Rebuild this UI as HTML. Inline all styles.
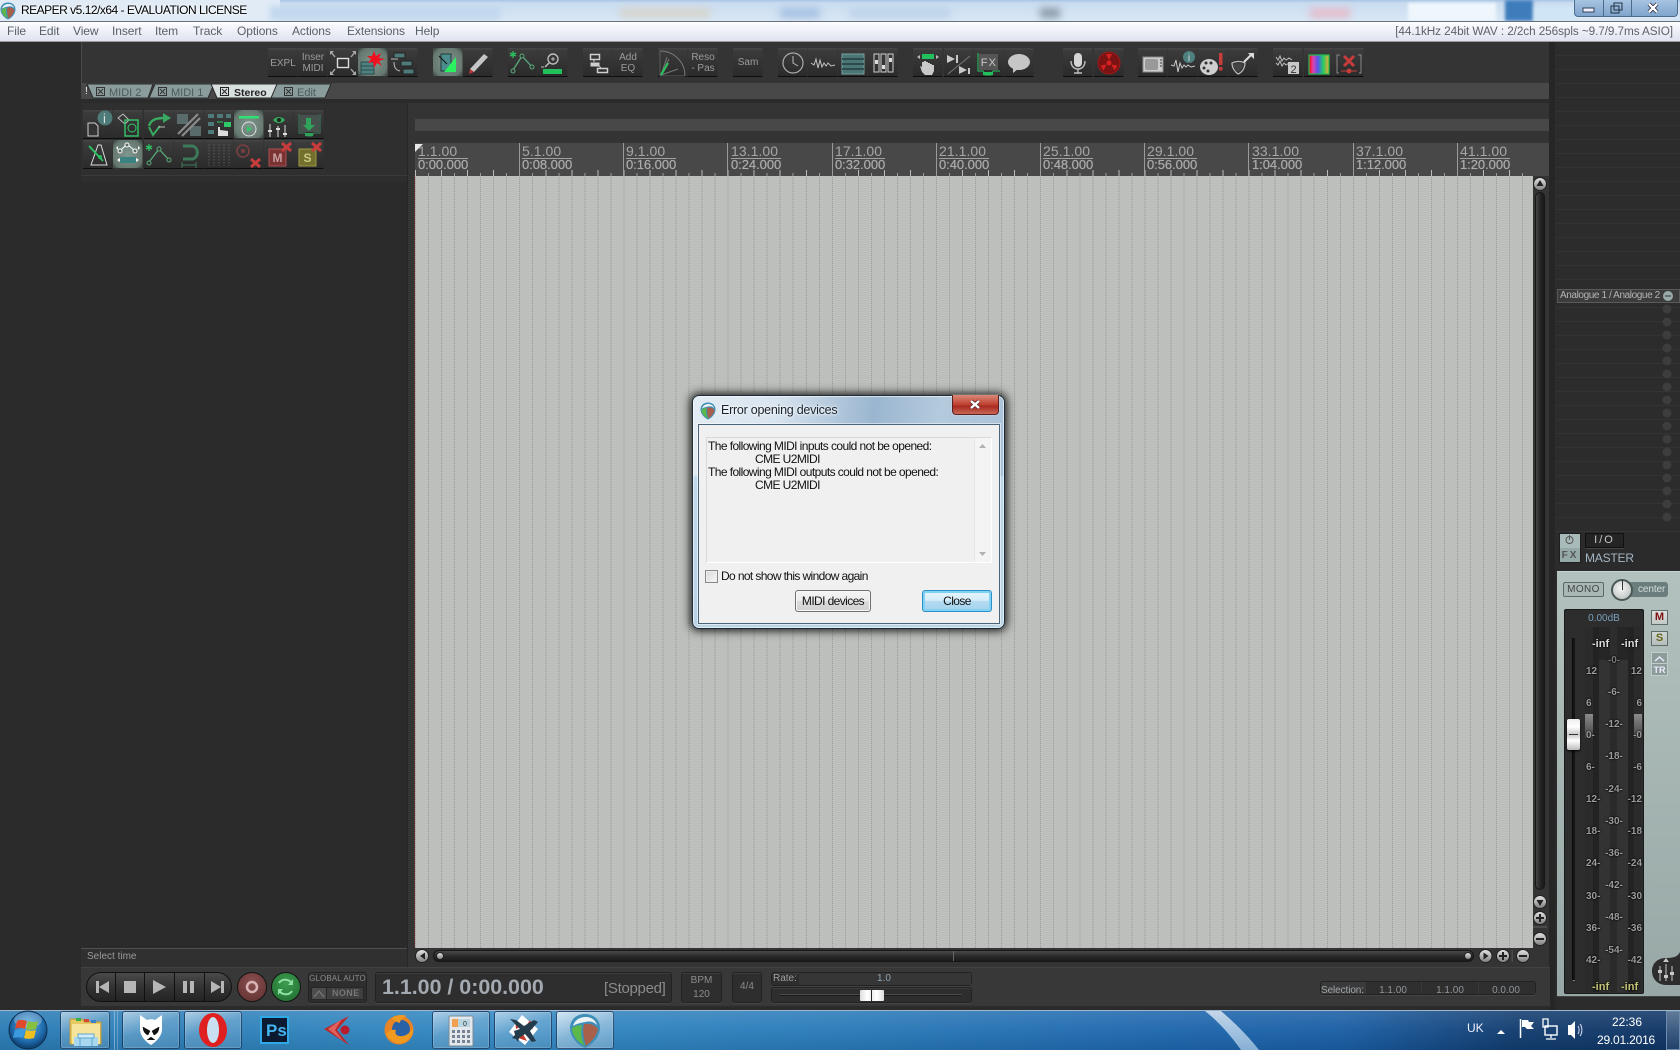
<!DOCTYPE html>
<html><head><meta charset="utf-8"><title>REAPER</title>
<style>
html,body{margin:0;padding:0;width:1680px;height:1050px;overflow:hidden;background:#2b2b2b;font-family:"Liberation Sans",sans-serif}
div,span{position:absolute;box-sizing:border-box;white-space:nowrap}
svg{position:absolute;left:0;top:0}
svg text{font-family:"Liberation Sans",sans-serif}
.m{top:24px;font-size:12px;line-height:15px;color:#5b5f66;letter-spacing:-.08px}
.bar{top:145px;font-size:14px;line-height:12px;color:#a6a6a6;letter-spacing:.05px}
.tim{top:159px;font-size:13px;line-height:11px;color:#ababab;text-shadow:0 0 .6px #aaa;letter-spacing:-.05px}
.ul{top:158px;height:1px;width:50px;background:#a0a0a0}
.tv{top:143px;height:33px;width:1px;background:#9a9a9a}
.lb{font-size:10px;line-height:11px;color:#9c9c9c;font-weight:bold;text-shadow:0 0 2px #000,0 0 1px #000}
.c{transform:translateX(-50%)}
.box{background:#2e2e2e;border:1px solid #222;border-radius:3px;box-shadow:inset 0 1px 0 #3c3c3c,0 1px 0 #444}
.dl{font-size:12px;line-height:13px;color:#111;letter-spacing:-.58px}
.sl{top:985px;font-size:10px;line-height:12px;color:#8d949a}
.tb{top:1011px;height:38px;border:1px solid rgba(10,40,80,.75);border-radius:3px;background:linear-gradient(160deg,rgba(255,255,255,.55),rgba(255,255,255,.2) 45%,rgba(255,255,255,.12));box-shadow:inset 0 0 1px #fff}
</style></head><body>

<!-- title bar -->
<div style="left:0;top:0;width:1680px;height:21px;background:linear-gradient(180deg,#a8c4e4 0,#c9dcf0 3px,#d9e7f5 100%);overflow:hidden">
 <div style="left:0;top:0;width:280px;height:21px;background:#e0ebf6"></div>
 <div style="left:270px;top:6px;width:230px;height:14px;background:#c2d8ee;filter:blur(3px)"></div>
 <div style="left:620px;top:8px;width:90px;height:10px;background:#d6d4cc;filter:blur(4px)"></div>
 <div style="left:780px;top:8px;width:40px;height:10px;background:#a5c0e2;filter:blur(4px)"></div>
 <div style="left:850px;top:8px;width:100px;height:10px;background:#bcd2e8;filter:blur(4px)"></div>
 <div style="left:1040px;top:8px;width:20px;height:10px;background:#8a9aa8;filter:blur(4px)"></div>
 <div style="left:1310px;top:8px;width:40px;height:10px;background:#e4bcca;filter:blur(4px)"></div>
 <div style="left:1408px;top:3px;width:88px;height:18px;background:#eff7fd;filter:blur(1.5px)"></div>
 <div style="left:1505px;top:0;width:28px;height:21px;background:#3f7cbc;filter:blur(1.5px)"></div>
 <div style="left:1535px;top:6px;width:40px;height:15px;background:#cfe6f6;filter:blur(2px)"></div>
 <div style="left:1574px;top:-2px;width:104px;height:19px;border:1px solid #4c6c8c;border-radius:0 0 4px 4px;background:linear-gradient(#a9c6e3,#7fa4cc);box-shadow:0 0 1px #fff"></div>
 <div style="left:1603px;top:0;width:1px;height:16px;background:#4c6c8c"></div>
 <div style="left:1631px;top:0;width:1px;height:16px;background:#4c6c8c"></div>
</div>
<div style="left:21px;top:3px;font-size:12px;line-height:15px;color:#000;text-shadow:0 0 3px #fff,0 0 3px #fff;letter-spacing:-.5px">REAPER v5.12/x64 - EVALUATION LICENSE</div>

<!-- menu -->
<div style="left:0;top:21px;width:1680px;height:21px;background:linear-gradient(180deg,#fff 0,#f4f6fb 25%,#dfe3f1 100%);border-top:1px solid #67717c;border-bottom:1px solid #9a9a9a"></div>
<span class="m" style="left:7px">File</span><span class="m" style="left:39px">Edit</span><span class="m" style="left:73px">View</span><span class="m" style="left:112px">Insert</span><span class="m" style="left:155px">Item</span><span class="m" style="left:193px">Track</span><span class="m" style="left:237px">Options</span><span class="m" style="left:292px">Actions</span><span class="m" style="left:347px">Extensions</span><span class="m" style="left:415px">Help</span>
<span class="m" style="right:7px;font-size:11.75px;color:#5f6368">[44.1kHz 24bit WAV : 2/2ch 256spls ~9.7/9.7ms ASIO]</span>

<!-- main backgrounds -->
<div style="left:0;top:42px;width:81px;height:969px;background:#2b2b2b"></div>
<div style="left:81px;top:42px;width:1468px;height:41px;background:#343434;border-left:1px solid #4a4a4a"></div>
<div style="left:81px;top:83px;width:1468px;height:16px;background:#484848"></div>
<div style="left:81px;top:99px;width:1468px;height:4px;background:#2b2b2b"></div>
<div style="left:81px;top:103px;width:326px;height:72px;background:#2f2f2f"></div>
<div style="left:81px;top:175px;width:326px;height:7px;background:#2e2e2e;border-top:1px solid #3a3a3a"></div>
<div style="left:81px;top:182px;width:326px;height:766px;background:#2b2b2b"></div>
<div style="left:81px;top:948px;width:326px;height:19px;background:#303030;border-top:1px solid #505050"></div>
<span style="left:87px;top:951px;font-size:10px;line-height:12px;color:#9a9a9a">Select time</span>
<div style="left:407px;top:103px;width:1142px;height:864px;background:#343434;border-left:1px solid #262626"></div>
<div style="left:415px;top:119px;width:1134px;height:12px;background:#484848"></div>

<!-- ruler -->
<div style="left:415px;top:143px;width:1134px;height:33px;background:#484848"></div>
<div style="left:415px;top:173px;width:1117px;height:3px;background:repeating-linear-gradient(to right,#9a9a9a 0 1px,transparent 1px 13.025px)"></div>
<div style="left:415px;top:170px;width:1117px;height:6px;background:repeating-linear-gradient(to right,#bdbdbd 0 1px,transparent 1px 26.05px)"></div>
<i class="tv" style="position:absolute;left:519px"></i><i class="tv" style="position:absolute;left:623px"></i><i class="tv" style="position:absolute;left:727px"></i><i class="tv" style="position:absolute;left:832px"></i><i class="tv" style="position:absolute;left:936px"></i><i class="tv" style="position:absolute;left:1040px"></i><i class="tv" style="position:absolute;left:1144px"></i><i class="tv" style="position:absolute;left:1248px"></i><i class="tv" style="position:absolute;left:1353px"></i><i class="tv" style="position:absolute;left:1457px"></i>
<span class="bar" style="left:418px">1.1.00</span><span class="tim" style="left:418px">0:00.000</span><i class="ul" style="position:absolute;left:418px"></i>
<span class="bar" style="left:522px">5.1.00</span><span class="tim" style="left:522px">0:08.000</span><i class="ul" style="position:absolute;left:522px"></i>
<span class="bar" style="left:626px">9.1.00</span><span class="tim" style="left:626px">0:16.000</span><i class="ul" style="position:absolute;left:626px"></i>
<span class="bar" style="left:731px">13.1.00</span><span class="tim" style="left:731px">0:24.000</span><i class="ul" style="position:absolute;left:731px"></i>
<span class="bar" style="left:835px">17.1.00</span><span class="tim" style="left:835px">0:32.000</span><i class="ul" style="position:absolute;left:835px"></i>
<span class="bar" style="left:939px">21.1.00</span><span class="tim" style="left:939px">0:40.000</span><i class="ul" style="position:absolute;left:939px"></i>
<span class="bar" style="left:1043px">25.1.00</span><span class="tim" style="left:1043px">0:48.000</span><i class="ul" style="position:absolute;left:1043px"></i>
<span class="bar" style="left:1147px">29.1.00</span><span class="tim" style="left:1147px">0:56.000</span><i class="ul" style="position:absolute;left:1147px"></i>
<span class="bar" style="left:1252px">33.1.00</span><span class="tim" style="left:1252px">1:04.000</span><i class="ul" style="position:absolute;left:1252px"></i>
<span class="bar" style="left:1356px">37.1.00</span><span class="tim" style="left:1356px">1:12.000</span><i class="ul" style="position:absolute;left:1356px"></i>
<span class="bar" style="left:1460px">41.1.00</span><span class="tim" style="left:1460px">1:20.000</span><i class="ul" style="position:absolute;left:1460px"></i>

<!-- arrange -->
<div style="left:415px;top:176px;width:1118px;height:772px;background-color:#bcbfbc;background-image:repeating-linear-gradient(to bottom,#bcbfbc 0 1px,transparent 1px 2px),repeating-linear-gradient(to right,#969a96 0 1px,transparent 1px 13.025px)"></div>
<div style="left:414px;top:176px;width:1px;height:772px;background:#5a2e2e"></div>

<!-- right column -->
<div style="left:1549px;top:42px;width:6px;height:969px;background:#262626"></div>
<div style="left:1555px;top:42px;width:125px;height:530px;background-color:#2c2c2c;background-image:repeating-linear-gradient(to bottom,transparent 0 13px,#333 13px 14px)"></div>
<div style="left:1557px;top:289px;width:123px;height:14px;background:#3c3c3c;border:1px solid #5a5a5a;font-size:10px;line-height:12px;color:#b4b4b4;padding-left:2px;letter-spacing:-.4px">Analogue 1 / Analogue 2</div>
<div style="left:1557px;top:533px;width:123px;height:39px;background:#2b2b2b"></div>

<!-- master panel -->
<div style="left:1557px;top:571px;width:123px;height:425px;background:linear-gradient(180deg,#b3c1be 0,#a8b7b4 40%,#97a8a6 100%);border-top:1px solid #c8d2d0"></div>
<div style="left:1564px;top:609px;width:80px;height:385px;background:#2d2d2d;border:1px solid #1a1a1a;border-radius:2px"></div>
<div style="left:1585px;top:627px;width:25px;height:365px;background:linear-gradient(to right,#2b2b2b 0 8px,#232323 8px 14px,#262626 14px)"></div>
<div style="left:1617px;top:627px;width:25px;height:365px;background:linear-gradient(to right,#262626 0 11px,#232323 11px 17px,#2b2b2b 17px)"></div>
<div style="left:1599px;top:660px;width:29px;height:332px;background:#333"></div>
<div style="left:1610px;top:660px;width:7px;height:332px;background:#2a2a2a"></div>
<div style="left:1585px;top:714px;width:8px;height:24px;background:linear-gradient(#8a8a8a,#444)"></div>
<div style="left:1634px;top:714px;width:8px;height:24px;background:linear-gradient(#8a8a8a,#444)"></div>
<div style="left:1572px;top:638px;width:3px;height:343px;background:#141414;border-left:1px solid #0c0c0c;border-bottom:1px solid #777"></div>
<div style="left:1567px;top:719px;width:13px;height:31px;background:linear-gradient(#eee 0,#fff 25%,#c9c9c9 50%,#fff 70%,#bbb 100%);border-radius:2px;box-shadow:0 1px 2px #000"></div>
<div style="left:1569px;top:734px;width:9px;height:1px;background:#333"></div>

<div style="left:1563px;top:582px;width:41px;height:15px;background:#a9b8b5;border:1px solid #5b6a68;border-radius:2px;font-size:10px;line-height:13px;color:#444;text-align:center;letter-spacing:.4px">MONO</div>
<div style="left:1622px;top:582px;width:46px;height:15px;background:#6c7d7d;border-radius:0 3px 3px 0;font-size:10px;line-height:15px;color:#d4dcdc;padding-left:16px;letter-spacing:-.1px">center</div>
<div style="left:1611px;top:579px;width:22px;height:22px;border-radius:50%;background:radial-gradient(circle at 45% 40%,#f6f6f6,#c2c8c6 75%);border:2px solid #4b5858"></div>
<div style="left:1621.5px;top:580px;width:1px;height:10px;background:#333"></div>
<div style="left:1651px;top:610px;width:17px;height:15px;background:linear-gradient(#dde2e0,#c2cac7);border:1px solid #5e6b69;font-size:11px;line-height:13px;font-weight:bold;color:#7e1010;text-align:center">M</div>
<div style="left:1651px;top:631px;width:17px;height:15px;background:linear-gradient(#cfd6d3,#b4bdba);border:1px solid #5e6b69;font-size:11px;line-height:13px;font-weight:bold;color:#66661a;text-align:center">S</div>
<div style="left:1651px;top:652px;width:17px;height:24px;background:#8d9c9b;border:1px solid #c3cccb;font-size:9px;line-height:9px;font-weight:bold;color:#eef;text-align:center;padding-top:13px">TR</div>
<div style="left:1652px;top:663px;width:15px;height:1px;background:#c3cccb"></div>

<span style="left:1604px;top:613px;font-size:10px;line-height:12px;color:#7a9fb8;transform:translateX(-50%)">0.00dB</span>
<span class="lb" style="left:1592px;top:639px;color:#ddd;font-size:11px">-inf</span><span class="lb" style="left:1621px;top:639px;color:#ddd;font-size:11px">-inf</span>
<span class="lb" style="left:1592px;top:982px;color:#c6c679;font-size:11px">-inf</span><span class="lb" style="left:1621px;top:982px;color:#c6c679;font-size:11px">-inf</span>
<span class="lb" style="left:1586px;top:666px">12</span><span class="lb" style="left:1586px;top:698px">6</span><span class="lb" style="left:1586px;top:730px">0-</span><span class="lb" style="left:1586px;top:762px">6-</span><span class="lb" style="left:1586px;top:794px">12-</span><span class="lb" style="left:1586px;top:826px">18-</span><span class="lb" style="left:1586px;top:858px">24-</span><span class="lb" style="left:1586px;top:891px">30-</span><span class="lb" style="left:1586px;top:923px">36-</span><span class="lb" style="left:1586px;top:955px">42-</span>
<span class="lb" style="right:38px;top:666px">12</span><span class="lb" style="right:38px;top:698px">6</span><span class="lb" style="right:38px;top:730px">-0</span><span class="lb" style="right:38px;top:762px">-6</span><span class="lb" style="right:38px;top:794px">-12</span><span class="lb" style="right:38px;top:826px">-18</span><span class="lb" style="right:38px;top:858px">-24</span><span class="lb" style="right:38px;top:891px">-30</span><span class="lb" style="right:38px;top:923px">-36</span><span class="lb" style="right:38px;top:955px">-42</span>
<span class="lb c" style="left:1614px;top:655px;color:#777">-0-</span><span class="lb c" style="left:1614px;top:687px">-6-</span><span class="lb c" style="left:1614px;top:719px">-12-</span><span class="lb c" style="left:1614px;top:751px">-18-</span><span class="lb c" style="left:1614px;top:784px">-24-</span><span class="lb c" style="left:1614px;top:816px">-30-</span><span class="lb c" style="left:1614px;top:848px">-36-</span><span class="lb c" style="left:1614px;top:880px">-42-</span><span class="lb c" style="left:1614px;top:912px">-48-</span><span class="lb c" style="left:1614px;top:945px">-54-</span>
<div style="left:1585px;top:533px;width:39px;height:15px;background:#242424;border:1px solid #111;box-shadow:0 1px 0 #444;font-size:11px;line-height:13px;color:#c8c8c8;text-align:center;letter-spacing:2px">I/O</div>
<span style="left:1585px;top:551px;font-size:12px;line-height:15px;color:#a4b6c4;letter-spacing:-.2px">MASTER</span>
<div style="left:1559px;top:533px;width:22px;height:30px;background:linear-gradient(#a8bab9 0 50%,#95a9a8 50%);border:1px solid #1e1e1e;font-size:10px;line-height:10px;color:#555;text-align:center;padding-top:17px;letter-spacing:2px;font-weight:bold">FX</div>
<div style="left:1557px;top:996px;width:123px;height:15px;background:#2c2c2c;border-top:1px solid #444"></div>

<!-- transport -->
<div style="left:81px;top:967px;width:1469px;height:44px;background:#383838;border-top:1px solid #424242"></div>
<div style="left:81px;top:1006px;width:1469px;height:5px;background:#2b2b2b"></div>
<div style="left:86px;top:972px;width:146px;height:30px;border:1px solid #111;border-radius:15px;background:linear-gradient(#4a4a4a,#333 50%,#242424)"></div>
<div style="left:115px;top:973px;width:1px;height:28px;background:#111"></div><div style="left:144px;top:973px;width:1px;height:28px;background:#111"></div><div style="left:174px;top:973px;width:1px;height:28px;background:#111"></div><div style="left:204px;top:973px;width:1px;height:28px;background:#111"></div>
<div style="left:237px;top:972px;width:30px;height:30px;border-radius:50%;background:radial-gradient(circle at 50% 35%,#8a5050,#5e2e2e);border:1px solid #141414"></div>
<div style="left:271px;top:972px;width:30px;height:30px;border-radius:50%;background:radial-gradient(circle at 50% 35%,#3d9c4f,#1f6a30);border:1px solid #141414"></div>
<div class="box" style="left:308px;top:972px;width:59px;height:31px"></div>
<span style="left:337.5px;top:974px;font-size:8px;line-height:10px;color:#8d8d8d;letter-spacing:.1px;transform:translateX(-50%)">GLOBAL AUTO</span>
<div style="left:311px;top:987px;width:53px;height:13px;background:#3f3f3f;border:1px solid #262626"></div>
<div style="left:311px;top:987px;width:16px;height:13px;background:#4d4d4d;border:1px solid #262626"></div>
<span style="left:332px;top:988px;font-size:9px;line-height:11px;color:#777;font-weight:bold;letter-spacing:.4px">NONE</span>
<div class="box" style="left:375px;top:972px;width:297px;height:31px"></div>
<span style="left:382px;top:975px;font-size:21.400px;line-height:25px;font-weight:bold;color:#a3a9b0">1.1.00 / 0:00.000</span>
<span style="left:604px;top:980px;font-size:15px;line-height:17px;color:#8b8b8b;letter-spacing:-.3px">[Stopped]</span>
<div class="box" style="left:681px;top:972px;width:41px;height:31px;font-size:10px;line-height:14px;color:#8c8c8c;text-align:center;padding-top:1px;white-space:normal">BPM<br>120</div>
<div class="box" style="left:732px;top:972px;width:30px;height:31px;font-size:10px;line-height:28px;color:#8c8c8c;text-align:center">4/4</div>
<div class="box" style="left:771px;top:972px;width:201px;height:14px"></div>
<div style="left:799px;top:973px;width:172px;height:12px;background:#363636"></div>
<span style="left:773px;top:973px;font-size:10px;line-height:12px;color:#a0a0a0">Rate:</span>
<span style="left:884px;top:973px;font-size:10px;line-height:12px;color:#8fa3b3;transform:translateX(-50%)">1.0</span>
<div class="box" style="left:771px;top:987px;width:201px;height:16px"></div>
<div style="left:780px;top:994px;width:182px;height:2px;background:#4b4b4b;border-bottom:1px solid #1b1b1b"></div>
<div style="left:860px;top:990px;width:24px;height:11px;background:linear-gradient(to right,#ddd,#fff 30%,#eee 50%,#fff 70%,#ddd);border-radius:1px"></div>
<div style="left:871px;top:990px;width:1px;height:11px;background:#222"></div>
<div class="box" style="left:1320px;top:981px;width:216px;height:14px;background:#3a3a3a"></div>
<div style="left:1366px;top:982px;width:55px;height:12px;background:#2f2f2f"></div><div style="left:1422px;top:982px;width:56px;height:12px;background:#2f2f2f"></div><div style="left:1479px;top:982px;width:56px;height:12px;background:#2f2f2f"></div>
<span class="sl" style="left:1321px;color:#a0a6aa;letter-spacing:-.1px">Selection:</span><span class="sl c" style="left:1393px">1.1.00</span><span class="sl c" style="left:1450px">1.1.00</span><span class="sl c" style="left:1506px">0.0.00</span>

<!-- scrollbars -->
<div style="left:433px;top:950px;width:1041px;height:12px;border-radius:6px;background:linear-gradient(#4a4a4a,#262626 60%,#1a1a1a);border:1px solid #161616"></div>
<div style="left:953px;top:951px;width:1px;height:10px;background:#666"></div>
<div style="left:1535px;top:192px;width:10px;height:698px;border-radius:5px;background:linear-gradient(to right,#454545,#232323 60%,#1a1a1a);border:1px solid #161616"></div>

<!-- SVG icon layer -->
<svg width="1680" height="1050" viewBox="0 0 1680 1050" xmlns="http://www.w3.org/2000/svg">
<defs>
<linearGradient id="bg" x1="0" y1="0" x2="0" y2="1"><stop offset="0" stop-color="#454545"/><stop offset=".1" stop-color="#3b3b3b"/><stop offset="1" stop-color="#2a2a2a"/></linearGradient>
<radialGradient id="ag" cx=".5" cy=".5" r=".65"><stop offset="0" stop-color="#7f978f"/><stop offset=".8" stop-color="#66786f"/><stop offset="1" stop-color="#3f4a46"/></radialGradient>
<linearGradient id="rn" x1="0" y1="0" x2="0" y2="1"><stop offset="0" stop-color="#e6e6e6"/><stop offset="1" stop-color="#7d7d7d"/></linearGradient>
<radialGradient id="orb" cx=".5" cy=".4" r=".6"><stop offset="0" stop-color="#5cb4e8"/><stop offset=".7" stop-color="#1e68a8"/><stop offset="1" stop-color="#0c3a66"/></radialGradient>
<linearGradient id="rb" x1="0" y1="0" x2="1" y2="0"><stop offset="0" stop-color="#f00"/><stop offset=".2" stop-color="#d4a"/><stop offset=".45" stop-color="#55e"/><stop offset=".7" stop-color="#2c6"/><stop offset="1" stop-color="#ea3"/></linearGradient>
<g id="b"><rect width="29.5" height="29" fill="url(#bg)"/><rect y="28" width="29.5" height="1" fill="#0d0d0d"/></g>
<g id="a"><rect width="29.5" height="29" fill="url(#ag)"/><rect y="28" width="29.5" height="1" fill="#333"/></g>
<g id="rp">
<path d="M16 1C7 1 1 7 1 15c0 9 8 17 15 20 7-3 15-11 15-20C31 7 25 1 16 1z" fill="#3f8fb8"/>
<path d="M4 13c2-7 8-9 13-9 6 0 10 4 11 8-4-4-8-4-12-3-5 1-9 2-12 4z" fill="#eef4f6"/>
<path d="M3 15c3-2 7-3 10-3-2 8 0 16 3 21C9 29 3 23 3 15z" fill="#5cb848"/>
<path d="M15 11c6-1 11 1 14 5-1 7-7 13-12 17-2-7-4-15-2-22z" fill="#a8604a"/>
</g>
</defs>

<!-- tiny logo title -->
<use href="#rp" transform="translate(0,2) scale(.5)"/>

<!-- window buttons -->
<g fill="none" stroke="#fff">
<rect x="1583" y="8" width="11" height="4" fill="#eef" stroke="#345"/>
<rect x="1611" y="6" width="8" height="7" stroke="#234" fill="none"/><rect x="1614" y="3" width="8" height="7" stroke="#234" fill="none"/>
<path d="M1649 4l8 8M1657 4l-8 8" stroke="#223" stroke-width="4"/><path d="M1649 4l8 8M1657 4l-8 8" stroke="#fff" stroke-width="2.4"/>
</g>

<!-- toolbar row -->
<g font-size="10" fill="#9c9c9c" text-anchor="middle">
<g transform="translate(268,48)"><use href="#b"/><text x="15" y="18" font-size="10">EXPL</text></g>
<g transform="translate(298,48)"><use href="#b"/><text x="15" y="12">Inser</text><text x="15" y="23">MIDI</text></g>
<g transform="translate(328,48)"><use href="#b"/><rect x="9.5" y="10.5" width="11" height="9" fill="none" stroke="#ddd" stroke-width="1.4"/><path d="M7 9L3 4M23 9l4-5M7 21l-4 5M23 21l4 5" stroke="#aaa" stroke-width="1.4"/><path d="M2 3l4 0-4 4zM28 3l-4 0 4 4zM2 27l4 0-4-4zM28 27l-4 0 4-4z" fill="#aaa"/></g>
<g transform="translate(358,48)"><use href="#a"/><rect x="3" y="14" width="13" height="12" fill="#4e8282" stroke="#2c4c4c"/><path d="M3 18h13M3 22h13" stroke="#2c4c4c"/><path d="M16 3l2 5 5-3-2 5 6 1-6 2 3 5-5-3-3 5-1-6-5 1 3-4-4-3 5 0z" fill="#f01020"/></g>
<g transform="translate(388,48)"><use href="#b"/><rect x="6" y="5" width="11" height="5" fill="#4e7a7a" stroke="#222"/><rect x="13" y="13" width="11" height="5" fill="#4e7a7a" stroke="#222"/><rect x="15" y="21" width="11" height="5" fill="#4e7a7a" stroke="#222"/><path d="M6 14c0 6 2 8 6 9M3 11h7" stroke="#bbb" fill="none"/></g>

<g transform="translate(433,48)"><use href="#a"/><path d="M8 6h10v17H8z" fill="#4b8c8c" stroke="#1e3a3a"/><path d="M11 24l12-15v15z" fill="#2bf060"/><path d="M6 8l8 8" stroke="#111" stroke-width="1"/></g>
<g transform="translate(463,48)"><use href="#b"/><path d="M7 21L21 6l4 3L11 24z" fill="#c6c6c6"/><path d="M7 21l4 3-5 2z" fill="#c0363a"/></g>

<g transform="translate(508,48)"><use href="#b"/><path d="M5 22l9-14 10 11" fill="none" stroke="#5aa97a" stroke-width="1.3"/><circle cx="5" cy="23" r="2" fill="#333" stroke="#5aa97a"/><circle cx="14" cy="8" r="2" fill="#333" stroke="#5aa97a"/><circle cx="24" cy="19" r="2" fill="#333" stroke="#5aa97a"/><path d="M5 3v7M2 5l6 3M8 5L2 8" stroke="#2ec060" stroke-width="1.3"/></g>
<g transform="translate(538,48)"><use href="#b"/><circle cx="15" cy="11" r="5" fill="none" stroke="#bbb" stroke-width="1.4"/><path d="M11 15l-4 4" stroke="#bbb" stroke-width="1.5"/><path d="M13 11h4M15 9v4" stroke="#bbb"/><rect x="5" y="21" width="19" height="5" fill="#22c05c"/><path d="M3 19h3" stroke="#bbb"/></g>

<g transform="translate(583,48)"><use href="#b"/><rect x="7.500" y="6.500" width="9" height="5" fill="none" stroke="#cfcfcf" stroke-width="1.500"/><rect x="7.500" y="14.500" width="9" height="4" fill="#cfcfcf"/><rect x="14.500" y="20.500" width="10" height="4" fill="none" stroke="#cfcfcf" stroke-width="1.500"/><path d="M11 12v2M16 18l2 2" stroke="#ccc"/></g>
<g transform="translate(613,48)"><use href="#b"/><text x="15" y="12">Add</text><text x="15" y="23">EQ</text></g>

<g transform="translate(658,48)"><use href="#b"/><path d="M2 3c14 0 25 11 25 25" fill="none" stroke="#7a7a7a"/><path d="M2 3v25h25" fill="none" stroke="#5a5a5a"/><path d="M3 27l17-6M3 27l8-16M3 27L9 9" stroke="#777"/><path d="M3 27l7-12" stroke="#2bc060" stroke-width="2.2"/></g>
<g transform="translate(688,48)"><use href="#b"/><text x="15" y="12">Reso</text><text x="15" y="23">- Pas</text></g>

<g transform="translate(733,48)"><use href="#b"/><text x="15" y="17">Sam</text></g>

<g transform="translate(778,48)"><use href="#b"/><circle cx="15" cy="15" r="10" fill="none" stroke="#aaa" stroke-width="1.2"/><path d="M15 8v7l5 3" stroke="#bbb" fill="none"/></g>
<g transform="translate(808,48)"><use href="#b"/><path d="M3 15l3 2 2-6 2 9 2-8 2 7 2-4 2 3 2-3 3 3 4-1" fill="none" stroke="#c0c0c0" stroke-width="1"/></g>
<g transform="translate(838,48)"><use href="#b"/><rect x="4" y="6" width="22" height="20" fill="#4a7776" stroke="#7aa0a0"/><path d="M4 11h22M4 16h22M4 21h22" stroke="#233c3c" stroke-width="1.4"/></g>
<g transform="translate(868,48)"><use href="#b"/><g fill="none" stroke="#cfcfcf"><rect x="6" y="6" width="5" height="18"/><rect x="13" y="6" width="5" height="18"/><rect x="20" y="6" width="5" height="18"/></g><rect x="7" y="12" width="3" height="4" fill="#ddd"/><rect x="14" y="17" width="3" height="4" fill="#ddd"/><rect x="21" y="10" width="3" height="4" fill="#ddd"/></g>

<g transform="translate(913,48)"><use href="#b"/><rect x="9" y="6" width="12" height="5" fill="#22c05c"/><path d="M7 7l-3 2 3 2zM23 7l3 2-3 2z" fill="#bbb"/><path d="M9 24l-2-6 2 1 0-5 2 0 0-1 2 0 0 1 2 0 0 1 2 0 0 1 2 0 0 1 2 0v6l-2 4H12z" fill="#c9c9c9"/></g>
<g transform="translate(944,48)"><use href="#b"/><path d="M3 7l8 4-8 4zM12 7h2v8h-2z" fill="#c8c8c8"/><path d="M4 26L26 8" stroke="#777"/><path d="M15 18l8 4-8 4zM24 20h2v6h-2z" fill="#c8c8c8"/></g>
<g transform="translate(974,48)"><use href="#b"/><rect x="5" y="6" width="19" height="16" fill="#555"/><path d="M4 5v18h5l2 4h6l2-4h7" fill="none" stroke="#22c05c"/><path d="M9 24h10v3H9z" fill="#22c05c"/><text x="15" y="18" font-size="11" letter-spacing="1.2" fill="#c8c8c8">FX</text></g>
<g transform="translate(1004,48)"><use href="#b"/><ellipse cx="15" cy="14" rx="11" ry="8" fill="#c6c6c6"/><path d="M9 20l0 5 5-4z" fill="#c6c6c6"/></g>

<g transform="translate(1063,48)"><use href="#b"/><rect x="11" y="5" width="8" height="14" rx="4" fill="#d5d5d5"/><path d="M8 13c0 5 3 8 7 8s7-3 7-8M15 21v4M11 25h8" fill="none" stroke="#c0c0c0" stroke-width="1.4"/></g>
<g transform="translate(1094,48)"><use href="#b"/><circle cx="15" cy="15" r="11" fill="#7a1414" stroke="#a01818"/><circle cx="15" cy="15" r="2.5" fill="#d52020"/><path d="M15 12l-3-6h6zM12.5 16.5l-6 1 3 5zM17.5 16.5l6 1-3 5z" fill="#d52020"/></g>

<g transform="translate(1138,48)"><use href="#b"/><rect x="5" y="9" width="20" height="15" fill="#ccc" stroke="#888"/><rect x="7" y="11" width="13" height="11" rx="2" fill="#999"/><path d="M22 12h2M22 15h2M22 18h2" stroke="#333"/></g>
<g transform="translate(1168,48)"><use href="#b"/><path d="M3 17l3 1 2-6 2 12 2-9 2 5 2-3 2 2 2-2 3 2 4-1" fill="none" stroke="#c8c8c8"/><circle cx="21" cy="9" r="6" fill="#4f8080"/><text x="21" y="13" font-size="10" fill="#ddd">i</text></g>
<g transform="translate(1198,48)"><use href="#b"/><ellipse cx="11" cy="19" rx="9" ry="8" fill="#cfcfcf"/><circle cx="8" cy="15" r="1.5" fill="#333"/><circle cx="13" cy="15" r="1.5" fill="#333"/><circle cx="6" cy="20" r="1.5" fill="#333"/><circle cx="10" cy="23" r="1.5" fill="#333"/><rect x="21" y="5" width="3.5" height="12" fill="#c83c3c"/><rect x="21" y="19" width="3.5" height="3.5" fill="#c83c3c"/></g>
<g transform="translate(1228,48)"><use href="#b"/><path d="M4 15c4-2 9-2 13 0 0 6-4 10-7 11-3-2-6-6-6-11z" fill="none" stroke="#c0c0c0" stroke-width="1.2"/><path d="M5 16c3-1 7-1 10 0 0 4-3 7-5 8-2-1-5-4-5-8z" fill="#444"/><path d="M16 14l7-7" stroke="#ddd" stroke-width="2"/><path d="M20 5h6v6z" fill="#ddd"/></g>

<g transform="translate(1273,48)"><use href="#b"/><path d="M3 9l2 3 2-4 2 5 2-3 2 2 3-2 3 2M3 15l2 2 2-4 2 5 2-3 2 2 3-2" fill="none" stroke="#bbb"/><rect x="15" y="14" width="11" height="12" fill="#c8c8c8"/><text x="20.5" y="25" font-size="11" fill="#333">2</text></g>
<g transform="translate(1304,48)"><use href="#b"/><rect x="5" y="7" width="20" height="19" fill="url(#rb)" stroke="#20c050" stroke-width="1.2"/></g>
<g transform="translate(1334,48)"><use href="#b"/><path d="M6 7H3v18h2M24 7h3v18h-2" stroke="#888" fill="none"/><path d="M10 8l10 10M20 8L10 18" stroke="#c83c3c" stroke-width="3"/><path d="M7 23h16" stroke="#c83c3c"/><circle cx="15" cy="23" r="2.4" fill="#c83c3c"/></g>
</g>

<!-- tabs -->
<g font-size="11" fill="#4d5c5c">
<path d="M87 84H153l-5 14H93z" fill="#8b9c9c" stroke="#2a2a2a"/>
<path d="M154 84H213l-6 14H148z" fill="#8b9c9c" stroke="#2a2a2a" transform="translate(1,0)"/>
<path d="M211 84H279l-7 14H217z" fill="#d8dfdf" stroke="#2a2a2a"/>
<path d="M277 84H331l-6 14H271z" fill="#8b9c9c" stroke="#2a2a2a"/>
<text x="85" y="94" fill="#eee" font-size="10">!</text>
<rect x="96.5" y="87.5" width="8" height="8" fill="none" stroke="#333"/><path d="M98 89l5 5M103 89l-5 5" stroke="#333"/>
<rect x="158.5" y="87.5" width="8" height="8" fill="none" stroke="#333"/><path d="M160 89l5 5M165 89l-5 5" stroke="#333"/>
<rect x="220.5" y="87.5" width="8" height="8" fill="none" stroke="#222"/><path d="M222 89l5 5M227 89l-5 5" stroke="#222"/>
<rect x="284.5" y="87.5" width="8" height="8" fill="none" stroke="#333"/><path d="M286 89l5 5M291 89l-5 5" stroke="#333"/>
<text x="109" y="96">MIDI 2</text><text x="171" y="96">MIDI 1</text><text x="234" y="96" fill="#222" font-weight="bold" font-size="10.5">Stereo</text><text x="297" y="96">Edit</text>
</g>

<!-- TCP buttons row 1 -->
<g>
<g transform="translate(83,110)"><use href="#b"/><circle cx="22" cy="8" r="7.5" fill="#4e7a7a"/><text x="20" y="13" font-size="13" fill="#ddd">i</text><path d="M5 13h7l3 3v10H5z" fill="#333" stroke="#ccc"/></g>
<g transform="translate(113,110)"><use href="#b"/><path d="M5 8l5-4 6 6-4 4z" fill="none" stroke="#bbb"/><rect x="12" y="10" width="13" height="16" fill="none" stroke="#32c76a" stroke-width="1.4"/><circle cx="19" cy="18" r="4" fill="none" stroke="#32c76a"/></g>
<g transform="translate(144,110)"><use href="#b"/><path d="M5 16c2-7 8-8 16-8" fill="none" stroke="#39a860" stroke-width="2.4"/><path d="M19 3l8 5-8 5z" fill="#39a860"/><path d="M5 17l4 8 7-9" fill="none" stroke="#39a860" stroke-width="2"/><path d="M14 17h7" stroke="#bbb"/></g>
<g transform="translate(174,110)"><use href="#b"/><rect x="3" y="4" width="11" height="10" fill="#596b6b"/><rect x="16" y="16" width="11" height="10" fill="#596b6b"/><path d="M4 24L24 4M8 26L26 8" stroke="#8a8a8a" stroke-width="2.2"/></g>
<g transform="translate(204,110)"><use href="#b"/><g fill="#4e7a7a"><rect x="4" y="4" width="6" height="4"/><rect x="13" y="4" width="6" height="4"/><rect x="22" y="4" width="5" height="4"/><rect x="4" y="12" width="6" height="4"/><rect x="4" y="20" width="6" height="4"/></g><rect x="20" y="12" width="7" height="5" fill="#30c868"/><path d="M13 12h6" stroke="#30c868"/><path d="M14 26v-9l2 0 0 3 8 1v5z" fill="#ddd"/></g>
<g transform="translate(234,110)"><use href="#a"/><rect x="5" y="6" width="20" height="2.5" fill="#30e070"/><circle cx="15" cy="19" r="7" fill="none" stroke="#ddd"/><path d="M13 16l5 3-5 3z" fill="#30c868"/></g>
<g transform="translate(264,110)"><use href="#b"/><path d="M9 10c3-4 9-4 12 0-3 4-9 4-12 0z" fill="#35a85c"/><circle cx="15" cy="10" r="2" fill="#222"/><path d="M6 14v13M14 16v11M21 15v12" stroke="#ddd"/><rect x="4" y="20" width="4" height="2" fill="#ddd"/><rect x="12" y="18" width="4" height="2" fill="#ddd"/><rect x="19" y="23" width="4" height="2" fill="#ddd"/></g>
<g transform="translate(294,110)"><use href="#b"/><path d="M5 4v19h6l2 3h5l2-3h6V4" fill="none" stroke="#3d7a5a"/><rect x="6" y="5" width="19" height="17" fill="#46514d"/><path d="M12 8h5v7h4l-6 6-6-6h3z" fill="#2fa35a"/><rect x="11" y="23" width="8" height="3" fill="#2fa35a"/></g>
</g>
<!-- TCP buttons row 2 -->
<g>
<g transform="translate(83,140)"><use href="#b"/><path d="M8 25L15 5h3l6 20z" fill="none" stroke="#ddd"/><path d="M6 6l14 15" stroke="#2ac060" stroke-width="2"/><circle cx="17" cy="17" r="2" fill="#2ac060"/></g>
<g transform="translate(113,140)"><use href="#a"/><path d="M7 11l7-7 8 7" fill="none" stroke="#fff"/><circle cx="7" cy="11" r="2" fill="#5a6b66" stroke="#fff"/><circle cx="14" cy="5" r="2" fill="#5a6b66" stroke="#fff"/><circle cx="22" cy="11" r="2" fill="#5a6b66" stroke="#fff"/><rect x="7" y="17" width="16" height="6" fill="#3d8282"/><path d="M4 20l3-2v4zM26 20l-3-2v4zM3 8l2-2v4zM27 8l-2-2v4z" fill="#fff"/></g>
<g transform="translate(144,140)"><use href="#b"/><path d="M5 22l10-13 10 11" fill="none" stroke="#5aa97a" stroke-width="1.3"/><circle cx="5" cy="23" r="2" fill="#333" stroke="#5aa97a"/><circle cx="15" cy="9" r="2" fill="#333" stroke="#5aa97a"/><circle cx="25" cy="20" r="2" fill="#333" stroke="#5aa97a"/><path d="M5 4v7M2 6l6 3M8 6L2 9" stroke="#2ec060" stroke-width="1.3"/></g>
<g transform="translate(174,140)"><use href="#b"/><path d="M9 6h10a7 7 0 0 1 0 13H9" fill="none" stroke="#3d7a5a" stroke-width="3"/><path d="M8 25h14M8 22v6M22 22v6M12 25h6" stroke="#3d7a5a"/></g>
<g transform="translate(204,140)"><use href="#b"/><path d="M5 4v22M10 4v22M15 4v22M20 4v22M25 4v22" stroke="#5a5a5a" stroke-dasharray="1.5 1.5"/></g>
<g transform="translate(234,140)"><use href="#b"/><circle cx="9" cy="11" r="6" fill="none" stroke="#7a4040" stroke-width="1.6"/><circle cx="9" cy="11" r="2" fill="#7a4040"/><path d="M17 19l9 8M26 19l-9 8" stroke="#c83c3c" stroke-width="3"/></g>
<g transform="translate(264,140)"><use href="#b"/><rect x="5" y="9" width="17" height="17" fill="#7a3232" stroke="#a85050"/><text x="13.5" y="22" font-size="12" font-weight="bold" fill="#c8a0a0" text-anchor="middle">M</text><path d="M18 3l9 8M27 3l-9 8" stroke="#c83c3c" stroke-width="3"/></g>
<g transform="translate(294,140)"><use href="#b"/><rect x="5" y="9" width="17" height="17" fill="#73702e" stroke="#9c9844"/><text x="13.5" y="22" font-size="12" font-weight="bold" fill="#cbc884" text-anchor="middle">S</text><path d="M18 3l9 8M27 3l-9 8" stroke="#c83c3c" stroke-width="3"/></g>
</g>

<!-- edit cursor flag -->
<path d="M415 144h8l-8 8z" fill="#e8e8e8"/>

<!-- scroll buttons -->
<g fill="url(#rn)" stroke="#222">
<circle cx="1540" cy="184" r="6.5"/><circle cx="1540" cy="902" r="6.5"/><circle cx="1540" cy="918" r="6.5"/><circle cx="1540" cy="939" r="6.5"/>
<circle cx="422" cy="956" r="6.5"/><circle cx="1485.5" cy="956" r="6.5"/><circle cx="1503" cy="956" r="6.5"/><circle cx="1523" cy="956" r="6.5"/>
<circle cx="440" cy="956" r="3.5"/><circle cx="1468" cy="956" r="3.5"/>
</g>
<g fill="#222"><path d="M1540 180l-3.500 6h7zM1536.500 900h7l-3.500 6zM1536 917h8v2h-8zM1539 914h2v8h-2zM1536 938h8v2h-8zM425 952.500v7l-5-3.500zM1483.500 952.500v7l5-3.500zM1499 955h8v2h-8zM1502 952h2v8h-2zM1519 955h8v2h-8z"/></g>
<rect x="1533" y="926" width="14" height="2" fill="#4b4b4b"/>
<rect x="1511.500" y="950" width="1.500" height="12" fill="#4b4b4b"/>

<!-- side dots -->
<g fill="#3d3d3d">
<circle cx="1667" cy="309" r="4.500"/><circle cx="1667" cy="322" r="4.500"/><circle cx="1667" cy="335" r="4.500"/><circle cx="1667" cy="348" r="4.500"/><circle cx="1667" cy="361" r="4.500"/><circle cx="1667" cy="374" r="4.500"/><circle cx="1667" cy="387" r="4.500"/><circle cx="1667" cy="400" r="4.500"/><circle cx="1667" cy="413" r="4.500"/><circle cx="1667" cy="426" r="4.500"/><circle cx="1667" cy="439" r="4.500"/><circle cx="1667" cy="452" r="4.500"/><circle cx="1667" cy="465" r="4.500"/><circle cx="1667" cy="478" r="4.500"/><circle cx="1667" cy="491" r="4.500"/><circle cx="1667" cy="504" r="4.500"/><circle cx="1667" cy="517" r="4.500"/>
</g>
<circle cx="1668" cy="296" r="5" fill="#9aa"/><path d="M1665 296h6" stroke="#333"/>
<!-- FX power -->
<circle cx="1569.500" cy="540" r="3.500" fill="none" stroke="#555"/><path d="M1569.500 535v5" stroke="#555"/>
<!-- automation chevron, mixer blob -->
<path d="M1655 661l4.500-4 4.500 4" fill="none" stroke="#eef" stroke-width="1.300"/>
<path d="M1680 952c-2 4-5 6-14 6-9 0-14 6-14 13s5 14 14 14h14z" fill="#2d2d2d"/>
<g stroke="#c8c8c8"><path d="M1660 966v15M1666 964v17M1672 966v15"/></g>
<g fill="#c8c8c8"><rect x="1658" y="970" width="4" height="3"/><rect x="1664" y="975" width="4" height="3"/><rect x="1670" y="972" width="4" height="3"/><path d="M1666 958l-3 4h6z"/></g>

<!-- transport icons -->
<g fill="#b6b6b6">
<path d="M96 981h3v12h-3zM109 981v12l-10-6z"/>
<path d="M124 981h12v12h-12z"/>
<path d="M153 980l13 7-13 7z"/>
<path d="M183 981h4v12h-4zM190 981h4v12h-4z"/>
<path d="M211 981v12l10-6zM221 981h3v12h-3z"/>
</g>
<circle cx="252" cy="987" r="5" fill="none" stroke="#d8b4b4" stroke-width="2.500"/>
<path d="M279 983c3-5 11-4 13 1M292 991c-3 5-11 4-13-1" fill="none" stroke="#8de0a0" stroke-width="2"/><path d="M293 979v6h-5zM278 995v-6h5z" fill="#8de0a0"/>
<path d="M314 997l5-6 5 6" fill="none" stroke="#7d7d7d"/>
</svg>

<!-- taskbar -->
<div style="left:0;top:1010px;width:1680px;height:40px;background:linear-gradient(to right,#2a7bb4 0,#3388c2 30%,#2a7ab8 50%,#1e66ad 70%,#1a5ea4 80%,#123d70 90%,#103564 100%);border-top:1px solid #9fb6cc"></div>
<div style="left:0;top:1011px;width:1680px;height:39px;background:linear-gradient(180deg,rgba(255,255,255,.12),rgba(255,255,255,.03) 50%,rgba(0,0,0,.08))"></div>
<div class="tb" style="left:60px;width:50px"></div>
<div style="left:114px;top:1011px;width:1px;height:39px;background:rgba(255,255,255,.35)"></div><div style="left:117px;top:1011px;width:1px;height:39px;background:rgba(255,255,255,.25)"></div>
<div class="tb" style="left:122px;width:58px"></div>
<div class="tb" style="left:184px;width:58px"></div>
<div class="tb" style="left:432px;width:58px"></div>
<div class="tb" style="left:494px;width:58px"></div>
<div class="tb" style="left:556px;width:58px;background:linear-gradient(160deg,rgba(255,255,255,.75),rgba(255,255,255,.4) 50%,rgba(255,255,255,.25))"></div>
<div style="left:1666px;top:1011px;width:14px;height:39px;background:linear-gradient(rgba(255,255,255,.25),rgba(255,255,255,.08));border:1px solid #6b8cad"></div>

<svg width="1680" height="1050" viewBox="0 0 1680 1050" xmlns="http://www.w3.org/2000/svg">
<defs>
<linearGradient id="st" x1="0" y1="0" x2="0" y2="1"><stop offset="0" stop-color="#fff" stop-opacity=".7"/><stop offset="1" stop-color="#cfe8fa" stop-opacity=".6"/></linearGradient>
</defs>
<!-- streak -->
<path d="M1205 1011h16c14 12 28 26 38 39h-18c-10-14-22-28-36-39z" fill="url(#st)"/>
<!-- start orb -->
<circle cx="28" cy="1030" r="19" fill="url(#orb)" stroke="#0d2f50"/>
<ellipse cx="28" cy="1020" rx="14" ry="8" fill="#fff" opacity=".25"/>
<path d="M17 1021c4-2 7-1 10 0l-2 8c-3-1-6-2-10 0z" fill="#e04a2a"/>
<path d="M28 1021c3 1 6 2 10 0l-2 8c-4 1-7 1-10 0z" fill="#86c03c"/>
<path d="M15 1030c4-1 7-1 10 0l-2 8c-3-1-6-1-10 0z" fill="#3c9ade"/>
<path d="M26 1030c3 1 6 1 10 0l-2 8c-4 1-7 1-10 0z" fill="#f0c020"/>
<!-- explorer -->
<path d="M70 1019h12l3 3h16v22H70z" fill="#e8c860" stroke="#b8963c"/>
<rect x="72" y="1024" width="28" height="20" fill="#f6e49c"/>
<rect x="76" y="1018" width="5" height="3" fill="#38b04a"/><rect x="84" y="1019" width="5" height="3" fill="#d84830"/><rect x="91" y="1020" width="5" height="3" fill="#3c80c8"/>
<path d="M74 1037h24v9H74z" fill="#a8d8f0"/><path d="M78 1034h16v4H78zM80 1038v8M92 1038v8" fill="#d0ecfa" stroke="#5ca8d0"/>
<!-- fox -->
<path d="M140 1015l7 5c2-1 6-1 8 0l7-5v14c0 7-6 13-11 16-5-3-11-9-11-16z" fill="#fff"/>
<path d="M143 1027l7 4-2 4c-3-1-5-4-5-8zM159 1027l-7 4 2 4c3-1 5-4 5-8zM147 1040l4-3 4 3" fill="#111" stroke="#111" stroke-width=".5"/>
<!-- opera -->
<ellipse cx="213" cy="1030" rx="14" ry="17" fill="#e02020"/><ellipse cx="213" cy="1030" rx="6" ry="13" fill="#c8e0f0"/>
<!-- ps -->
<rect x="261" y="1017" width="27" height="26" fill="#0b1a30" stroke="#2fa8e8" stroke-width="2"/>
<text x="266" y="1036" font-size="17" fill="#44b4f0" font-weight="bold">Ps</text>
<!-- cubase -->
<path d="M349 1016l-25 13 25 16-12-15z" fill="#b82a2a"/><path d="M328 1029l14-10-7 11 8 11z" fill="#e06060"/><circle cx="345" cy="1030" r="4.500" fill="#b81c2c"/>
<!-- firefox -->
<circle cx="399" cy="1030" r="14.500" fill="#e88424"/><circle cx="401" cy="1029" r="9" fill="#2a62a8"/><path d="M386 1034c4 8 13 11 19 8 5-3 9-9 8-14-3 6-9 9-14 8-4-1-4-4-3-6-4-1-7 1-10 4zM392 1018c4-3 10-4 15-2-4 1-7 4-7 7-3-1-6-2-8-5z" fill="#f09a20"/>
<!-- calc -->
<rect x="449" y="1016" width="24" height="30" rx="1" fill="#e4e8ec" stroke="#7a8a98"/><rect x="452" y="1019" width="18" height="8" fill="#b8d4e0"/><rect x="452" y="1019" width="6" height="8" fill="#f0a050"/><text x="463" y="1026" font-size="7" fill="#333">0</text>
<g fill="#758494"><rect x="452" y="1030" width="3" height="3"/><rect x="457" y="1030" width="3" height="3"/><rect x="462" y="1030" width="3" height="3"/><rect x="467" y="1030" width="3" height="3"/><rect x="452" y="1035" width="3" height="3"/><rect x="457" y="1035" width="3" height="3"/><rect x="462" y="1035" width="3" height="3"/><rect x="467" y="1035" width="3" height="3"/><rect x="452" y="1040" width="3" height="3"/><rect x="457" y="1040" width="3" height="3"/><rect x="462" y="1040" width="3" height="3"/><rect x="467" y="1040" width="3" height="3"/></g>
<!-- plane -->
<path d="M522 1015l16 14-13 16-16-13z" fill="#fff"/><path d="M515 1020l7 6-6 3zM530 1020l-4 6 7 3zM518 1038l5-4 4 7z" fill="#c83c2c"/>
<path d="M510 1019l6 1 8 6 10-6 4 2-8 9 6 10-4 1-7-8-6 4-1 4-2-3-4-1 3-3-1-4 6-2z" fill="#233c4c"/>
<!-- reaper -->
<use href="#rp" transform="translate(569,1013) scale(1)"/>
<!-- tray -->
<path d="M1497 1034l4-4 4 4z" fill="#fff"/>
<path d="M1520.500 1019v19" stroke="#fff" stroke-width="1.500"/><path d="M1522 1020h6l1 2 5 0-3 4 3 3h-7l-2-2h-3z" fill="#fff"/>
<rect x="1545" y="1026" width="12" height="9" fill="none" stroke="#fff" stroke-width="1.400"/><path d="M1543 1019h5v8h-5zM1551 1035v3M1546 1039h10" stroke="#fff" fill="none" stroke-width="1.300"/>
<path d="M1568 1025h3l4-4v18l-4-4h-3z" fill="#fff"/><path d="M1578 1026c1.500 2 1.500 6 0 8M1580 1024c2.500 3 2.500 9 0 12" stroke="#dde" fill="none"/>
</svg>
<span style="left:1467px;top:1021px;font-size:12px;line-height:14px;color:#eef">UK</span>
<span style="left:1627px;top:1015px;font-size:12px;line-height:14px;color:#fff;transform:translateX(-50%)">22:36</span>
<span style="left:1626px;top:1033px;font-size:12px;line-height:14px;color:#fff;transform:translateX(-50%);letter-spacing:-.2px">29.01.2016</span>

<!-- dialog -->
<div style="left:692px;top:395px;width:313px;height:234px;border:1px solid #1e2c3a;border-radius:7px;background:linear-gradient(180deg,rgba(255,255,255,0) 0,rgba(255,255,255,0) 34%,rgba(190,215,235,.9) 35%,#b9d2e6 100%),linear-gradient(95deg,#e3ecf4 0,#d8e4ef 25%,#9ab6d0 55%,#b4cadd 75%,#a8c0d6 100%);box-shadow:0 0 9px 2px rgba(0,0,0,.85),inset 0 0 0 1px rgba(255,255,255,.6)">
 <div style="left:259px;top:-1px;width:47px;height:20px;border:1px solid #5c2020;border-top:none;border-radius:0 0 4px 4px;background:linear-gradient(#d88a78,#c04030 50%,#a82a20 60%,#c86858);box-shadow:0 0 1px #fff"></div>
 <svg width="47" height="20" style="left:259px;top:-1px"><path d="M19 6l8 7M27 6l-8 7" stroke="#5c2a2a" stroke-width="4"/><path d="M19 6l8 7M27 6l-8 7" stroke="#fff" stroke-width="2.400"/></svg>
 <svg width="18" height="18" viewBox="0 0 32 36" style="left:6px;top:6px"><use href="#rp"/></svg>
 <span style="left:28px;top:7px;font-size:12.500px;line-height:15px;color:#18222c;text-shadow:0 0 4px #fff,0 0 2px #fff;letter-spacing:-.25px">Error opening devices</span>
 <div style="left:5px;top:28px;width:302px;height:200px;background:#f0f0f0;border:1px solid #4c6478;box-shadow:0 0 0 1px rgba(255,255,255,.5)"></div>
 <div style="left:13px;top:41px;width:286px;height:126px;background:#f0f0f0;border:1px solid #d6dade;border-right-color:#fff;border-bottom-color:#fff"></div>
 <div style="left:281px;top:42px;width:17px;height:124px;background:#f4f4f4;border-left:1px solid #e4e4e4"></div>
 <svg width="17" height="124" style="left:281px;top:42px"><path d="M5 10l3.500-4 3.500 4z" fill="#b0b0b0"/><path d="M5 114l3.500 4 3.500-4z" fill="#b0b0b0"/></svg>
 <span class="dl" style="left:15px;top:44px">The following MIDI inputs could not be opened:</span>
 <span class="dl" style="left:62px;top:57px">CME U2MIDI</span>
 <span class="dl" style="left:15px;top:70px">The following MIDI outputs could not be opened:</span>
 <span class="dl" style="left:62px;top:83px">CME U2MIDI</span>
 <div style="left:12px;top:174px;width:13px;height:13px;background:linear-gradient(135deg,#d8d8d8,#f8f8f8);border:1px solid #8a8a8a;box-shadow:inset 0 0 0 1px #eee"></div>
 <span class="dl" style="left:28px;top:174px;letter-spacing:-.62px">Do not show this window again</span>
 <div style="left:102px;top:194px;width:76px;height:22px;border:1px solid #707070;border-radius:3px;background:linear-gradient(#f4f4f4 0,#ececec 48%,#dcdcdc 50%,#d0d0d0 100%);box-shadow:inset 0 0 0 1px #f8f8f8;font-size:12px;line-height:20px;color:#111;text-align:center;letter-spacing:-.6px">MIDI devices</div>
 <div style="left:229px;top:194px;width:70px;height:22px;border:1px solid #2e8fc6;border-radius:3px;background:linear-gradient(#e8f5fb 0,#d4ecf8 48%,#b4dcf2 50%,#a4d2ec 100%);box-shadow:inset 0 0 0 2px #7fd2f4;font-size:12px;line-height:20px;color:#111;text-align:center;letter-spacing:-.6px">Close</div>
</div>
</body></html>
